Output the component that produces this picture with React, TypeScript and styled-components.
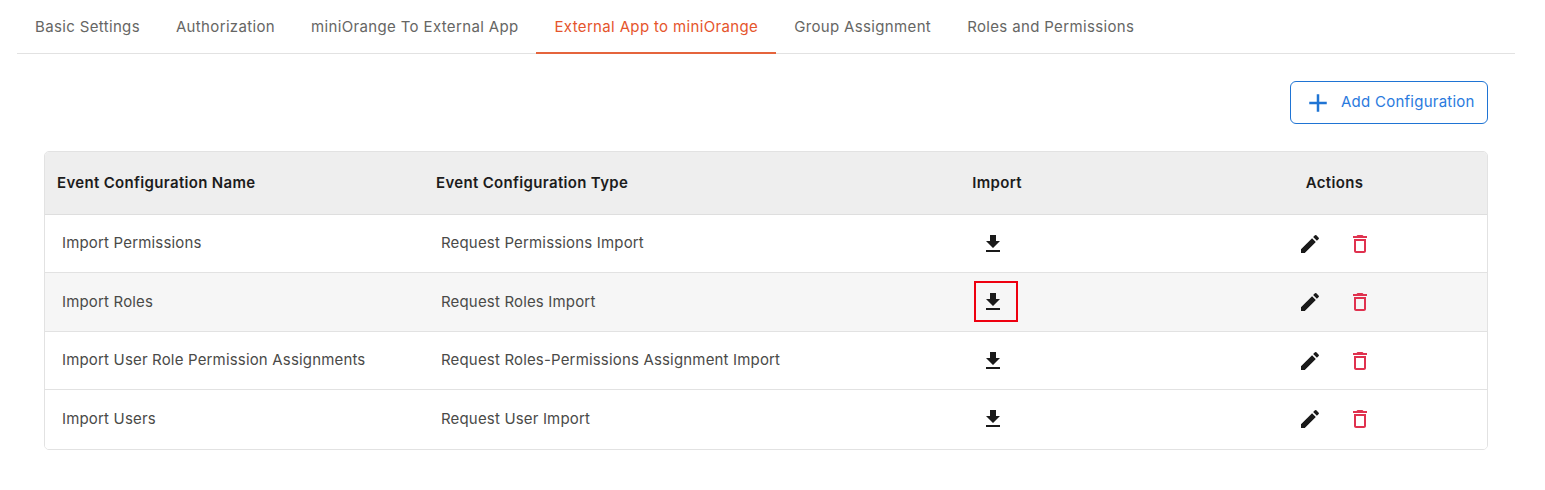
import styled, { createGlobalStyle } from "styled-components"

const GlobalStyle = createGlobalStyle`
  html, body { margin: 0; padding: 0; background: #fff; }
  body { font-family: "Inter", "Noto Sans", sans-serif; }
`

const Page = styled.div`
  width: 1545px;
  height: 490px;
  overflow: hidden;
  padding: 0 30px 0 17px;
  box-sizing: border-box;
`

const TabBar = styled.div`
  display: flex;
  height: 54px;
  box-sizing: border-box;
  border-bottom: 1px solid #e2e2e2;
`

const Tab = styled.div<{ $active?: boolean }>`
  padding: 0 18px;
  height: 54px;
  box-sizing: border-box;
  line-height: 54px;
  font-size: 15px;
  letter-spacing: 0.35px;
  white-space: nowrap;
  color: ${(p) => (p.$active ? "#e5552c" : "#666664")};
  border-bottom: 2px solid ${(p) => (p.$active ? "#e5643c" : "transparent")};
`

const Toolbar = styled.div`
  display: flex;
  justify-content: flex-end;
  padding: 27px;
`

const AddButton = styled.button`
  display: flex;
  align-items: center;
  width: 198px;
  height: 43px;
  padding: 0 0 2px 12px;
  gap: 8px;
  box-sizing: border-box;
  background: #fff;
  border: 1px solid #1f74d4;
  border-radius: 6px;
  color: #2a7ade;
  font-family: inherit;
  font-size: 15px;
  letter-spacing: 0.25px;
  white-space: nowrap;
`

const PlusWrap = styled.span`
  display: flex;
  margin-top: 2px;
`

const TableWrap = styled.div`
  width: 1444px;
  margin-left: 27px;
  box-sizing: border-box;
  border: 1px solid #e2e2e2;
  border-radius: 5px;
  overflow: hidden;
`

const Table = styled.table`
  width: 100%;
  table-layout: fixed;
  border-collapse: collapse;
`

const HeadCell = styled.th<{ $center?: boolean }>`
  height: 60px;
  padding: 0 12px 2px;
  background: #eeeeee;
  border-bottom: 1px solid #dedede;
  font-size: 15px;
  font-weight: 600;
  letter-spacing: 0.33px;
  color: #1c1c1c;
  text-align: ${(p) => (p.$center ? "center" : "left")};
`

const Row = styled.tr<{ $shaded?: boolean; $tall?: boolean }>`
  height: ${(p) => (p.$tall ? 59 : 58)}px;
  background: ${(p) => (p.$shaded ? "#f6f6f6" : "#fff")};
  border-bottom: 1px solid #e2e2e2;
  &:last-child { border-bottom: 0; }
`

const Cell = styled.td`
  padding: 0 17px 2px;
  font-size: 15px;
  letter-spacing: 0.17px;
  color: #4a4a48;
`

const CenterCell = styled.td`
  padding: 0;
`

const IconRow = styled.div`
  display: flex;
  justify-content: center;
  align-items: center;
`

const ImportIcon = styled.span<{ $marked?: boolean }>`
  position: relative;
  display: flex;
  margin-right: 9px;
  ${(p) =>
    p.$marked &&
    `&::after {
      content: "";
      position: absolute;
      left: -7px;
      top: -9px;
      width: 44px;
      height: 41px;
      box-sizing: border-box;
      border: 2px solid #ee0010;
    }`}
`

const ActionGroup = styled(IconRow)`
  gap: 26px;
  margin-left: 1px;
`

type IconProps = { d: string; color: string; size?: number }

function Icon({ d, color, size = 24 }: IconProps) {
  return (
    <svg width={size} height={size} viewBox="0 0 24 24" fill={color}>
      <path d={d} />
    </svg>
  )
}

const DOWNLOAD = "M19 9h-4V3H9v6H5l7 7 7-7zM5 18v2h14v-2H5z"
const EDIT = "M3 17.25V21h3.75L17.81 9.94l-3.75-3.75L3 17.25zM20.71 7.04c.39-.39.39-1.02 0-1.41l-2.34-2.34a.9959.9959 0 0 0-1.41 0l-1.83 1.83 3.75 3.75 1.83-1.83z"
const TRASH = "M16 9v10H8V9h8m-1.5-6h-5l-1 1H5v2h14V4h-3.5l-1-1zM18 7H6v12c0 1.1.9 2 2 2h8c1.1 0 2-.9 2-2V7z"
const PLUS = "M19 13h-6v6h-2v-6H5v-2h6V5h2v6h6v2z"

const tabs = [
  "Basic Settings",
  "Authorization",
  "miniOrange To External App",
  "External App to miniOrange",
  "Group Assignment",
  "Roles and Permissions",
]

const rows = [
  { name: "Import Permissions", type: "Request Permissions Import" },
  { name: "Import Roles", type: "Request Roles Import", shaded: true, marked: true, tall: true },
  { name: "Import User Role Permission Assignments", type: "Request Roles-Permissions Assignment Import" },
  { name: "Import Users", type: "Request User Import", tall: true },
]

function App() {
  return (
    <>
      <GlobalStyle />
      <Page>
        <TabBar>
          {tabs.map((t) => (
            <Tab key={t} $active={t === "External App to miniOrange"}>{t}</Tab>
          ))}
        </TabBar>
        <Toolbar>
          <AddButton>
            <PlusWrap>
              <Icon d={PLUS} color="#1f74d4" size={30} />
            </PlusWrap>
            Add Configuration
          </AddButton>
        </Toolbar>
        <TableWrap>
          <Table>
            <colgroup>
              <col style={{ width: 379 }} />
              <col style={{ width: 388 }} />
              <col style={{ width: 370 }} />
              <col style={{ width: 305 }} />
            </colgroup>
            <thead>
              <tr>
                <HeadCell>Event Configuration Name</HeadCell>
                <HeadCell>Event Configuration Type</HeadCell>
                <HeadCell $center>Import</HeadCell>
                <HeadCell $center>Actions</HeadCell>
              </tr>
            </thead>
            <tbody>
              {rows.map((r) => (
                <Row key={r.name} $shaded={r.shaded} $tall={r.tall}>
                  <Cell>{r.name}</Cell>
                  <Cell>{r.type}</Cell>
                  <CenterCell>
                    <IconRow>
                      <ImportIcon $marked={r.marked}>
                        <Icon d={DOWNLOAD} color="#1a1a1a" />
                      </ImportIcon>
                    </IconRow>
                  </CenterCell>
                  <CenterCell>
                    <ActionGroup>
                      <Icon d={EDIT} color="#1a1a1a" />
                      <Icon d={TRASH} color="#e0324f" />
                    </ActionGroup>
                  </CenterCell>
                </Row>
              ))}
            </tbody>
          </Table>
        </TableWrap>
      </Page>
    </>
  )
}

export default App
